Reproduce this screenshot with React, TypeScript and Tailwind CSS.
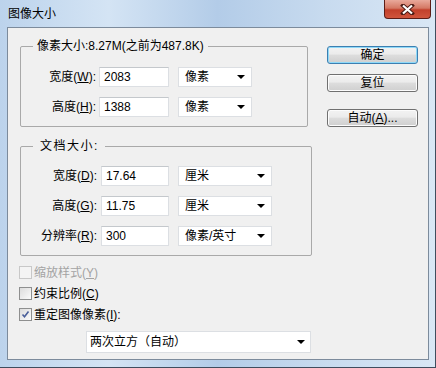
import { ReactNode } from 'react';

const font = "font-['Liberation_Sans','Noto_Sans_CJK_SC',sans-serif]";

function Arrow() {
  return (
    <svg width="8" height="4" viewBox="0 0 8 4" className="shrink-0">
      <path d="M0 0 H8 L4 4 Z" fill="#000" />
    </svg>
  );
}

function Key({ k }: { k: string }) {
  return <u className="underline-offset-[1px]">{k}</u>;
}

function Row({ label, k, tail, value, unit, lw, iw, gap, sw }: {
  label: string; k: string; tail?: string; value: string; unit: string;
  lw: string; iw: string; gap: string; sw: string;
}) {
  return (
    <div className="flex items-center h-[20px]">
      <div className={`${lw} text-right whitespace-nowrap leading-[14px]`}>
        {label}(<Key k={k} />){tail ?? ':'}
      </div>
      <div className={`${gap} ${iw} h-[20px] bg-white border border-[#dcdfe3] border-t-[#c4c8cc] flex items-center pl-[4px] leading-[14px]`}>
        {value}
      </div>
      <div className={`ml-[9px] ${sw} h-[20px] bg-white border border-[#dcdfe3] flex items-center justify-between pl-[6px] pr-[6px] leading-[14px]`}>
        <span>{unit}</span>
        <Arrow />
      </div>
    </div>
  );
}

function Group({ title, className, titleClass = '', children }: { title: string; className: string; titleClass?: string; children: ReactNode }) {
  return (
    <div className={`relative border border-[#a9a9a9] rounded-[2px] ${className}`}>
      <span className={`absolute -top-[8px] left-[12px] px-[4px] bg-[#f0f0f0] leading-[14px] whitespace-nowrap ${titleClass}`}>
        {title}
      </span>
      {children}
    </div>
  );
}

function Check({ label, k, tail, checked, disabled }: {
  label: string; k: string; tail?: string; checked?: boolean; disabled?: boolean;
}) {
  return (
    <div className="flex items-center h-[13px] -ml-[1px]">
      <div className={`w-[13px] h-[13px] border ${disabled ? 'border-[#c8c8c8] bg-[#f4f4f4]' : 'border-[#8e8f8f] bg-[linear-gradient(135deg,#dcdcdc,#fbfbfb)]'} flex items-center justify-center`}>
        {checked && (
          <svg width="9" height="9" viewBox="0 0 9 9">
            <path d="M1.5 4.5 L3.5 6.8 L7.5 1.5" stroke="#4a5f9a" strokeWidth="1.6" fill="none" />
          </svg>
        )}
      </div>
      <span className={`ml-[2px] leading-[14px] ${disabled ? 'text-[#a3a3a3]' : 'text-black'}`}>
        {label}(<Key k={k} />){tail}
      </span>
    </div>
  );
}

function Btn({ children, primary, className = '' }: { children: ReactNode; primary?: boolean; className?: string }) {
  return (
    <div className={`w-[91px] h-[18px] rounded-[3px] border flex items-center justify-center leading-[14px] bg-[linear-gradient(180deg,#f3f3f3_0%,#ebebeb_45%,#dddddd_50%,#cfcfcf_100%)] ${primary ? 'border-[#3c7fb1] shadow-[inset_0_0_0_1px_#8fd9f8]' : 'border-[#707070] shadow-[inset_0_0_0_1px_#fcfcfc]'} ${className}`}>
      {children}
    </div>
  );
}

export default function App() {
  return (
    <div className={`w-[436px] h-[368px] overflow-hidden flex flex-col text-[12px] text-black ${font} bg-[linear-gradient(90deg,#bcd3ec_0%,#d4e4f4_25%,#b3cce8_50%,#c8dbef_75%,#d9e7f5_100%)] border-r border-b border-[#3f4d5e]`}>
      <div className="h-[27px] flex items-start shrink-0">
        <span className="pl-[8px] pt-[7px] leading-[14px] text-black">图像大小</span>
        <div className="ml-auto mr-[4px] w-[47px] h-[19px] rounded-b-[4px] border border-t-0 border-[#5c1d17] bg-[linear-gradient(180deg,#e9a99b_0%,#d47864_45%,#c2402b_55%,#d0553d_100%)] flex items-center justify-center">
          <svg width="15" height="11" viewBox="0 0 15 11">
            <path d="M3 1.5 L12 9.5 M12 1.5 L3 9.5" stroke="#4a1a14" strokeWidth="4" strokeLinecap="square" />
            <path d="M3 1.5 L12 9.5 M12 1.5 L3 9.5" stroke="#fff" strokeWidth="2.2" />
          </svg>
        </div>
      </div>
      <div className="flex-1 ml-[7px] mr-[6px] mb-[7px] border border-[#7c8b9c] bg-[#f0f0f0] flex">
        <div className="w-[304px] pl-[12px] pt-[18px] flex flex-col">
          <Group title="像素大小:8.27M(之前为487.8K)" className="w-[288px] h-[81px] pt-[20px] flex flex-col gap-[10px]">
            <Row label="宽度" k="W" value="2083" unit="像素" lw="w-[75px]" iw="w-[70px]" gap="ml-[3px]" sw="w-[74px]" />
            <Row label="高度" k="H" value="1388" unit="像素" lw="w-[75px]" iw="w-[70px]" gap="ml-[3px]" sw="w-[74px]" />
          </Group>
          <Group title="文档大小:" titleClass="pl-[7px] pr-[6px] tracking-[1.5px]" className="mt-[19px] w-[292px] h-[110px] pt-[19px] flex flex-col gap-[10px]">
            <Row label="宽度" k="D" value="17.64" unit="厘米" lw="w-[76px]" iw="w-[68px]" gap="ml-[4px]" sw="w-[94px]" />
            <Row label="高度" k="G" value="11.75" unit="厘米" lw="w-[76px]" iw="w-[68px]" gap="ml-[4px]" sw="w-[94px]" />
            <Row label="分辨率" k="R" value="300" unit="像素/英寸" lw="w-[76px]" iw="w-[68px]" gap="ml-[4px]" sw="w-[94px]" />
          </Group>
          <div className="mt-[10px] flex flex-col gap-[8px]">
            <Check label="缩放样式" k="Y" disabled />
            <Check label="约束比例" k="C" />
            <Check label="重定图像像素" k="I" tail=":" checked />
          </div>
          <div className="mt-[10px] ml-[66px] w-[225px] h-[22px] bg-white border border-[#dcdfe3] flex items-center justify-between pl-[3px] pr-[5px] leading-[14px]">
            <span>两次立方（自动）</span>
            <Arrow />
          </div>
        </div>
        <div className="ml-[15px] pt-[18px] flex flex-col">
          <Btn primary>确定</Btn>
          <Btn className="mt-[10px]">复位</Btn>
          <Btn className="mt-[17px]">自动(<Key k="A" />)...</Btn>
        </div>
      </div>
    </div>
  );
}
